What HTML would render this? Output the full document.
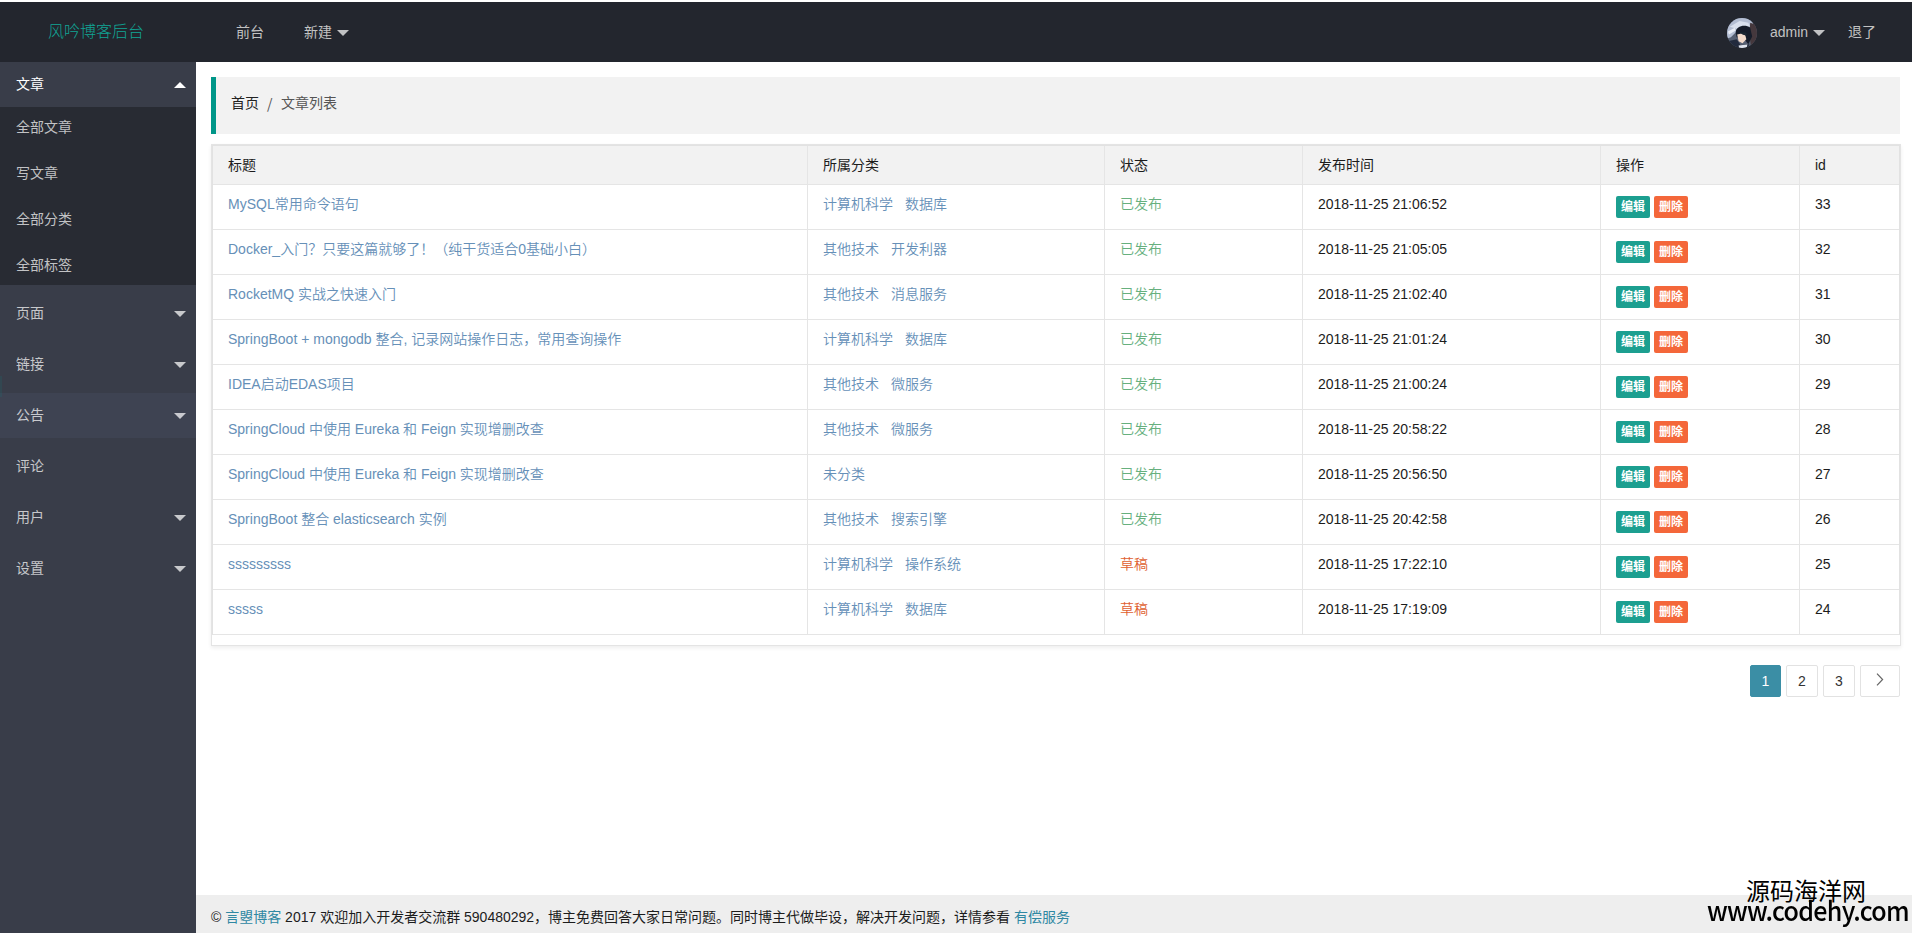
<!DOCTYPE html>
<html lang="zh-CN">
<head>
<meta charset="utf-8">
<title>风吟博客后台</title>
<style>
*{box-sizing:border-box;margin:0;padding:0}
html,body{width:1912px;height:933px;overflow:hidden;background:#fff}
body{position:relative;font-family:"Liberation Sans","Noto Sans CJK SC",sans-serif;font-size:14px;color:#1c1c1c;line-height:24px}
a{text-decoration:none;color:inherit}
ul,li,dl,dd{list-style:none}

/* header */
.header{position:absolute;left:0;top:2px;width:1912px;height:60px;background:#23262E}
.logo{position:absolute;left:48px;top:0;height:60px;line-height:60px;font-size:16px;color:#10a595;font-weight:300}
.hnav{position:absolute;top:0;height:60px;line-height:60px;color:#c2c2c2;font-size:14px;white-space:nowrap}
.tri{position:absolute;width:0;height:0;border:6px solid transparent}
.tri.down{border-top-color:rgba(255,255,255,.72);border-bottom-width:0}
.tri.up{border-bottom-color:#fff;border-top-width:0}
.avatar{position:absolute;left:1726.5px;top:15.5px;width:30px;height:30px;border-radius:50%;overflow:hidden}

/* side */
.side{position:absolute;left:0;top:62px;width:196px;height:871px;background:#393D49;overflow:hidden}
.side .item{position:absolute;left:0;width:196px;height:45px;line-height:45px;padding-left:16px;color:rgba(255,255,255,.72);font-size:14px}
.side .item.on{color:#fff}
.side .item.hov{background:#3e4352}
.side .child{position:absolute;left:0;top:45px;width:196px;height:178px;background:#282B33}
.side .sub{position:absolute;left:0;width:196px;height:40px;line-height:40px;padding-left:16px;color:rgba(255,255,255,.72);font-size:14px}
.side .tri{left:174px}

/* body */
.crumb{position:absolute;left:211px;top:77px;width:1689px;height:57px;background:#f2f2f2;border-left:5px solid #009688;font-size:14px}
.crumb span{position:absolute;top:0;height:52px;line-height:52px;white-space:nowrap}

.tbox{position:absolute;left:211px;top:144px;width:1690px;height:502px;border:1px solid #e4e4e4;background:#fff;box-shadow:0 2px 4px rgba(0,0,0,.07)}
table{border-collapse:separate;border-spacing:0;table-layout:fixed;width:1688px;position:absolute;left:0;top:0;border:1px solid #e2e2e2;border-bottom:none}
th,td{border:0 solid #e5e5e5;border-right-width:1px;border-bottom-width:1px;text-align:left;font-weight:400;font-size:14px;white-space:nowrap;overflow:hidden;vertical-align:top}
th{height:39px;line-height:20px;padding:9px 15px 0 15px;background:#f2f2f2;color:#1c1c1c}
td{height:45px;line-height:20px;padding:9px 15px 0 15px;color:#1c1c1c}
tr>*:last-child{border-right:none}
td.op{padding-top:11px;line-height:0;font-size:0}
td a{color:#6690b8;font-weight:350}
td a+a{margin-left:12px}
.pub{color:#66b07e;font-weight:350}
.draft{color:#e0602f;font-weight:350}
.btn{display:inline-block;width:34px;height:22px;line-height:22px;border-radius:2px;color:#fff!important;font-size:12px;text-align:center;vertical-align:top;margin:0!important;font-weight:700;line-height:23px}
.btn.e{background:#1c9f90}
.btn.d{background:#f4673a;margin-left:4px!important}

.page{position:absolute;top:665px;height:32px;line-height:30px;border:1px solid #e2e2e2;border-radius:2px;text-align:center;font-size:14px;color:#333;background:#fff}
.page.cur{background:#3b8ea5;border-color:#3b8ea5;color:#fff}

.footer{position:absolute;left:196px;top:895px;width:1716px;height:38px;background:#eee;padding-left:15px;line-height:44px;font-size:14px;color:#1c1c1c;white-space:nowrap;overflow:hidden}
.footer a{color:#2f88a3}

.wm{position:absolute;color:#000;white-space:nowrap;line-height:1}
</style>
</head>
<body>

<div class="header">
  <div class="logo">风吟博客后台</div>
  <div class="hnav" style="left:236px">前台</div>
  <div class="hnav" style="left:304px">新建</div>
  <i class="tri down" style="left:337px;top:28px"></i>
  <div class="avatar">
    <svg width="30" height="30" viewBox="0 0 31 31" style="display:block">
      <defs><filter id="bl" x="-10%" y="-10%" width="120%" height="120%"><feGaussianBlur stdDeviation="0.7"/></filter></defs>
      <rect width="31" height="31" fill="#565f72"/>
      <g filter="url(#bl)">
      <path d="M-2 -2H24L28 9L12 12L4 20L-2 22Z" fill="#b4bed3"/>
      <path d="M3 9L13 3L22 5L24 9L10 11Z" fill="#d9e0ee"/>
      <path d="M1 14L8 10L9 13L2 17Z" fill="#e9edf6"/>
      <path d="M24 5L33 8V29L25 31L23 16Z" fill="#45393d"/>
      <path d="M9 15C9 8 19 6 24 10L26 19L22 27L18 22L10 20Z" fill="#151d2a"/>
      <path d="M10.5 17L15 16L19 18L20 22L16 26L12 24Z" fill="#f2dacb"/>
      <path d="M13 15L20 15L20 18L16 17Z" fill="#1b2533"/>
      <path d="M1 24L10 22L14 28L23 27L21 33H1Z" fill="#232c3c"/>
      <path d="M12 28.5L21 27.5L20 33H13Z" fill="#dfe3ee"/>
      </g>
    </svg>
  </div>
  <div class="hnav" style="left:1770px">admin</div>
  <i class="tri down" style="left:1813px;top:28px"></i>
  <div class="hnav" style="left:1848px">退了</div>
</div>

<div class="side">
  <div class="item on" style="top:0">文章<i class="tri up" style="top:20px"></i>
  </div>
  <div class="child">
    <div class="sub" style="top:0">全部文章</div>
    <div class="sub" style="top:46px">写文章</div>
    <div class="sub" style="top:92px">全部分类</div>
    <div class="sub" style="top:138px">全部标签</div>
  </div>
  <div class="item" style="top:229px">页面<i class="tri down" style="top:20px"></i></div>
  <div class="item" style="top:280px">链接<i class="tri down" style="top:20px"></i></div>
  <div class="item hov" style="top:331px">公告<i class="tri down" style="top:20px"></i></div>
  <div class="item" style="top:382px">评论</div>
  <i style="position:absolute;left:0;top:314px;width:2px;height:21px;background:rgba(0,150,136,.12)"></i>
  <div class="item" style="top:433px">用户<i class="tri down" style="top:20px"></i></div>
  <div class="item" style="top:484px">设置<i class="tri down" style="top:20px"></i></div>
</div>

<div class="crumb">
  <span style="left:15px;color:#222">首页</span>
  <span style="left:51px;color:#555;font-family:'Noto Sans CJK SC',sans-serif;font-size:14px">/</span>
  <span style="left:65px;color:#555">文章列表</span>
</div>

<div class="tbox">
<table>
<colgroup><col style="width:595px"><col style="width:297px"><col style="width:198px"><col style="width:298px"><col style="width:199px"><col style="width:99px"></colgroup>
<thead><tr><th>标题</th><th>所属分类</th><th>状态</th><th>发布时间</th><th>操作</th><th>id</th></tr></thead>
<tbody>
<tr><td><a>MySQL常用命令语句</a></td><td><a>计算机科学</a><a>数据库</a></td><td class="pub">已发布</td><td>2018-11-25 21:06:52</td><td class="op"><a class="btn e">编辑</a><a class="btn d">删除</a></td><td>33</td></tr>
<tr><td><a>Docker_入门？只要这篇就够了！（纯干货适合0基础小白）</a></td><td><a>其他技术</a><a>开发利器</a></td><td class="pub">已发布</td><td>2018-11-25 21:05:05</td><td class="op"><a class="btn e">编辑</a><a class="btn d">删除</a></td><td>32</td></tr>
<tr><td><a>RocketMQ 实战之快速入门</a></td><td><a>其他技术</a><a>消息服务</a></td><td class="pub">已发布</td><td>2018-11-25 21:02:40</td><td class="op"><a class="btn e">编辑</a><a class="btn d">删除</a></td><td>31</td></tr>
<tr><td><a>SpringBoot + mongodb 整合, 记录网站操作日志，常用查询操作</a></td><td><a>计算机科学</a><a>数据库</a></td><td class="pub">已发布</td><td>2018-11-25 21:01:24</td><td class="op"><a class="btn e">编辑</a><a class="btn d">删除</a></td><td>30</td></tr>
<tr><td><a>IDEA启动EDAS项目</a></td><td><a>其他技术</a><a>微服务</a></td><td class="pub">已发布</td><td>2018-11-25 21:00:24</td><td class="op"><a class="btn e">编辑</a><a class="btn d">删除</a></td><td>29</td></tr>
<tr><td><a>SpringCloud 中使用 Eureka 和 Feign 实现增删改查</a></td><td><a>其他技术</a><a>微服务</a></td><td class="pub">已发布</td><td>2018-11-25 20:58:22</td><td class="op"><a class="btn e">编辑</a><a class="btn d">删除</a></td><td>28</td></tr>
<tr><td><a>SpringCloud 中使用 Eureka 和 Feign 实现增删改查</a></td><td><a>未分类</a></td><td class="pub">已发布</td><td>2018-11-25 20:56:50</td><td class="op"><a class="btn e">编辑</a><a class="btn d">删除</a></td><td>27</td></tr>
<tr><td><a>SpringBoot 整合 elasticsearch 实例</a></td><td><a>其他技术</a><a>搜索引擎</a></td><td class="pub">已发布</td><td>2018-11-25 20:42:58</td><td class="op"><a class="btn e">编辑</a><a class="btn d">删除</a></td><td>26</td></tr>
<tr><td><a>sssssssss</a></td><td><a>计算机科学</a><a>操作系统</a></td><td class="draft">草稿</td><td>2018-11-25 17:22:10</td><td class="op"><a class="btn e">编辑</a><a class="btn d">删除</a></td><td>25</td></tr>
<tr><td><a>sssss</a></td><td><a>计算机科学</a><a>数据库</a></td><td class="draft">草稿</td><td>2018-11-25 17:19:09</td><td class="op"><a class="btn e">编辑</a><a class="btn d">删除</a></td><td>24</td></tr>
</tbody>
</table>
</div>

<div class="page cur" style="left:1750px;width:31px">1</div>
<div class="page" style="left:1786px;width:32px">2</div>
<div class="page" style="left:1823px;width:32px">3</div>
<div class="page" style="left:1860px;width:40px"><svg width="8" height="13" viewBox="0 0 8 13" style="position:absolute;left:15px;top:7px"><polyline points="1,0.7 6.6,6.5 1,12.3" fill="none" stroke="#666" stroke-width="1.2"/></svg></div>

<div class="footer">© <a>言曌博客</a> 2017 欢迎加入开发者交流群 590480292，博主免费回答大家日常问题。同时博主代做毕设，解决开发问题，详情参看 <a>有偿服务</a></div>

<div class="wm" id="wm1" style="left:1746px;top:878px;font-size:24px;font-family:'Noto Sans CJK SC',sans-serif">源码海洋网</div>
<div class="wm" id="wm2" style="left:1707px;top:896px;font-size:27px;letter-spacing:-0.8px;transform:scaleX(0.929);transform-origin:0 0;font-weight:500;font-family:'Noto Sans CJK SC',sans-serif">www.codehy.com</div>

</body>
</html>
